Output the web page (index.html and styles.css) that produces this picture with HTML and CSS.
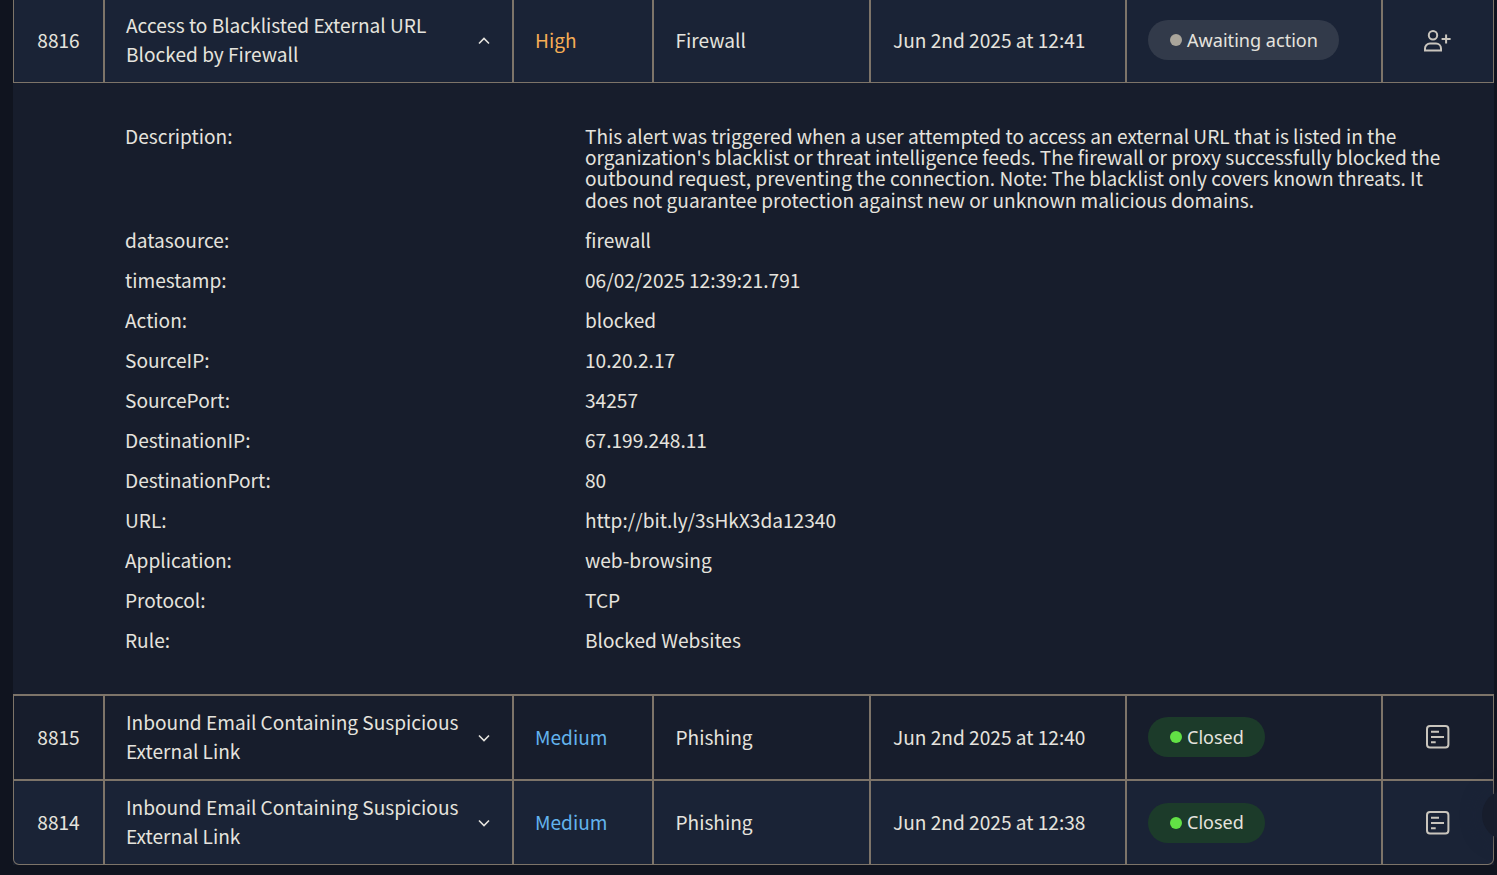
FILE: index.html
```html
<!DOCTYPE html>
<html lang="en">
<head>
<meta charset="utf-8">
<title>Alerts</title>
<link rel="stylesheet" href="styles.css">
</head>
<body>
<main class="table">
  <section class="row row-first row-alt">
    <div class="cell cell-id">8816</div>
    <div class="cell cell-name"><span class="name-text">Access to Blacklisted External URL Blocked by Firewall</span>
      <svg class="chev" viewBox="0 0 12 8" width="12" height="8"><path d="M1 6.5 6 1.5l5 5" /></svg></div>
    <div class="cell sev sev-high">High</div>
    <div class="cell cell-type">Firewall</div>
    <div class="cell cell-date">Jun 2nd 2025 at 12:41</div>
    <div class="cell cell-status"><span class="pill pill-wait"><i class="dot"></i>Awaiting action</span></div>
    <div class="cell cell-action">
      <svg class="act" viewBox="0 0 28 22" width="28" height="22"><circle cx="9" cy="5.2" r="4.2"/><path d="M1 20.5v-2a5 5 0 0 1 5-5h6a5 5 0 0 1 5 5v2z"/><path d="M17.6 9h9M22.1 4.5v9"/></svg>
    </div>
  </section>

  <section class="details">
    <dl class="dl">
      <div class="item item-desc"><dt>Description:</dt><dd>This alert was triggered when a user attempted to access an external URL that is listed in the organization's blacklist or threat intelligence feeds. The firewall or proxy successfully blocked the outbound request, preventing the connection. Note: The blacklist only covers known threats. It does not guarantee protection against new or unknown malicious domains.</dd></div>
      <div class="item"><dt>datasource:</dt><dd>firewall</dd></div>
      <div class="item"><dt>timestamp:</dt><dd>06/02/2025 12:39:21.791</dd></div>
      <div class="item"><dt>Action:</dt><dd>blocked</dd></div>
      <div class="item"><dt>SourceIP:</dt><dd>10.20.2.17</dd></div>
      <div class="item"><dt>SourcePort:</dt><dd>34257</dd></div>
      <div class="item"><dt>DestinationIP:</dt><dd>67.199.248.11</dd></div>
      <div class="item"><dt>DestinationPort:</dt><dd>80</dd></div>
      <div class="item"><dt>URL:</dt><dd>http://bit.ly/3sHkX3da12340</dd></div>
      <div class="item"><dt>Application:</dt><dd>web-browsing</dd></div>
      <div class="item"><dt>Protocol:</dt><dd>TCP</dd></div>
      <div class="item"><dt>Rule:</dt><dd>Blocked Websites</dd></div>
    </dl>
  </section>

  <section class="row row-mid">
    <div class="cell cell-id">8815</div>
    <div class="cell cell-name"><span class="name-text">Inbound Email Containing Suspicious External Link</span>
      <svg class="chev" viewBox="0 0 12 8" width="12" height="8"><path d="M1 1.5l5 5 5-5" /></svg></div>
    <div class="cell sev sev-med">Medium</div>
    <div class="cell cell-type">Phishing</div>
    <div class="cell cell-date">Jun 2nd 2025 at 12:40</div>
    <div class="cell cell-status"><span class="pill pill-closed"><i class="dot"></i>Closed</span></div>
    <div class="cell cell-action">
      <svg class="act" viewBox="0 0 24 24" width="24" height="24"><rect x="1" y="1" width="21.4" height="21.6" rx="3"/><path d="M5 6.7h8M5 12h13M5 17.2h4.7"/></svg>
    </div>
  </section>

  <section class="row row-alt row-last">
    <div class="cell cell-id">8814</div>
    <div class="cell cell-name"><span class="name-text">Inbound Email Containing Suspicious External Link</span>
      <svg class="chev" viewBox="0 0 12 8" width="12" height="8"><path d="M1 1.5l5 5 5-5" /></svg></div>
    <div class="cell sev sev-med">Medium</div>
    <div class="cell cell-type">Phishing</div>
    <div class="cell cell-date">Jun 2nd 2025 at 12:38</div>
    <div class="cell cell-status"><span class="pill pill-closed"><i class="dot"></i>Closed</span></div>
    <div class="cell cell-action">
      <svg class="act" viewBox="0 0 24 24" width="24" height="24"><rect x="1" y="1" width="21.4" height="21.6" rx="3"/><path d="M5 6.7h8M5 12h13M5 17.2h4.7"/></svg>
    </div>
  </section>
</main>
<div class="fab"></div>
</body>
</html>
```
FILE: styles.css
```css
* { box-sizing: border-box; }
html, body { margin: 0; height: 100%; }
body {
  position: relative;
  background: #10141f;
  color: #e5e3de;
  font-family: "Noto Sans CJK JP", "Noto Sans", sans-serif;
  font-size: 19.1px;
  overflow: hidden;
}
.table {
  width: 1481px;
  margin-left: 13px;
  margin-top: -1px;
  background: #171d2c;
}
.row {
  display: grid;
  grid-template-columns: 91px 409px 140px 217px 256px 256px 110px;
  height: 85px;
  border-left: 1px solid #7d7469;
  border-right: 1px solid #7d7469;
  background: #171d2c;
}
.row-first { height: 84px; border-bottom: 1px solid #7d7469; }
.row-mid { border-top: 2px solid #7d7469; }
.row-alt { background: #1a2336; }
.row-last {
  height: 86px;
  border-top: 2px solid #7d7469;
  border-bottom: 1px solid #7d7469;
  border-radius: 0 0 6px 6px;
}
.cell {
  display: flex;
  align-items: center;
  padding: 0 21px;
  line-height: 28.8px;
  border-right: 2px solid #7d7469;
}
.cell:last-child { border-right: 0; }
.cell-id { justify-content: center; padding: 0; }
.cell-name { justify-content: space-between; padding: 0 22px 0 21px; }
.cell-type { padding-left: 21.5px; }
.cell-date { padding-left: 22px; }
.row-first .cell-status, .row-mid .cell-status, .row-mid .cell-action { padding-bottom: 1px; }
.name-text { max-width: 340px; margin-top: -2px; }
.row-last .name-text { line-height: 29.6px; margin-top: -1px; }
.sev-high { color: #f6ad55; }
.sev-med { color: #63b3ed; }
.chev { flex: none; fill: none; stroke: #e5e3de; stroke-width: 1.6; }
.pill {
  display: inline-flex;
  align-items: center;
  height: 40px;
  padding: 0 21px 0 22px;
  border-radius: 20px;
  font-family: "Noto Sans", sans-serif;
  font-size: 18px;
}
.pill-wait { background: #323a4a; font-size: 18.1px; }
.pill-closed { background: #1c3b2a; }
.dot { width: 12px; height: 12px; border-radius: 50%; margin-right: 5px; }
.pill-wait .dot { background: #aaa59b; }
.pill-closed .dot { background: #62e145; }
.cell-action { justify-content: center; padding: 0; }
.act { fill: none; stroke: #c9c5bd; stroke-width: 2; }
.details { padding: 43px 0 32px 112px; }
.dl { margin: 0; }
.item { display: grid; grid-template-columns: 460px 1fr; align-items: start; height: 40px; line-height: 20px; padding-top: 8px; }
.item-desc { height: auto; padding-top: 0; padding-bottom: 11.4px; line-height: 21.2px; }
dt, dd { margin: 0; }
dd { padding-right: 34px; }
.fab {
  position: absolute;
  left: 1482px;
  top: 790px;
  width: 50px;
  height: 50px;
  border-radius: 50%;
  background: #171d2c;
  box-shadow: 0 0 18px 2px rgba(26, 35, 54, 0.6);
}
```
